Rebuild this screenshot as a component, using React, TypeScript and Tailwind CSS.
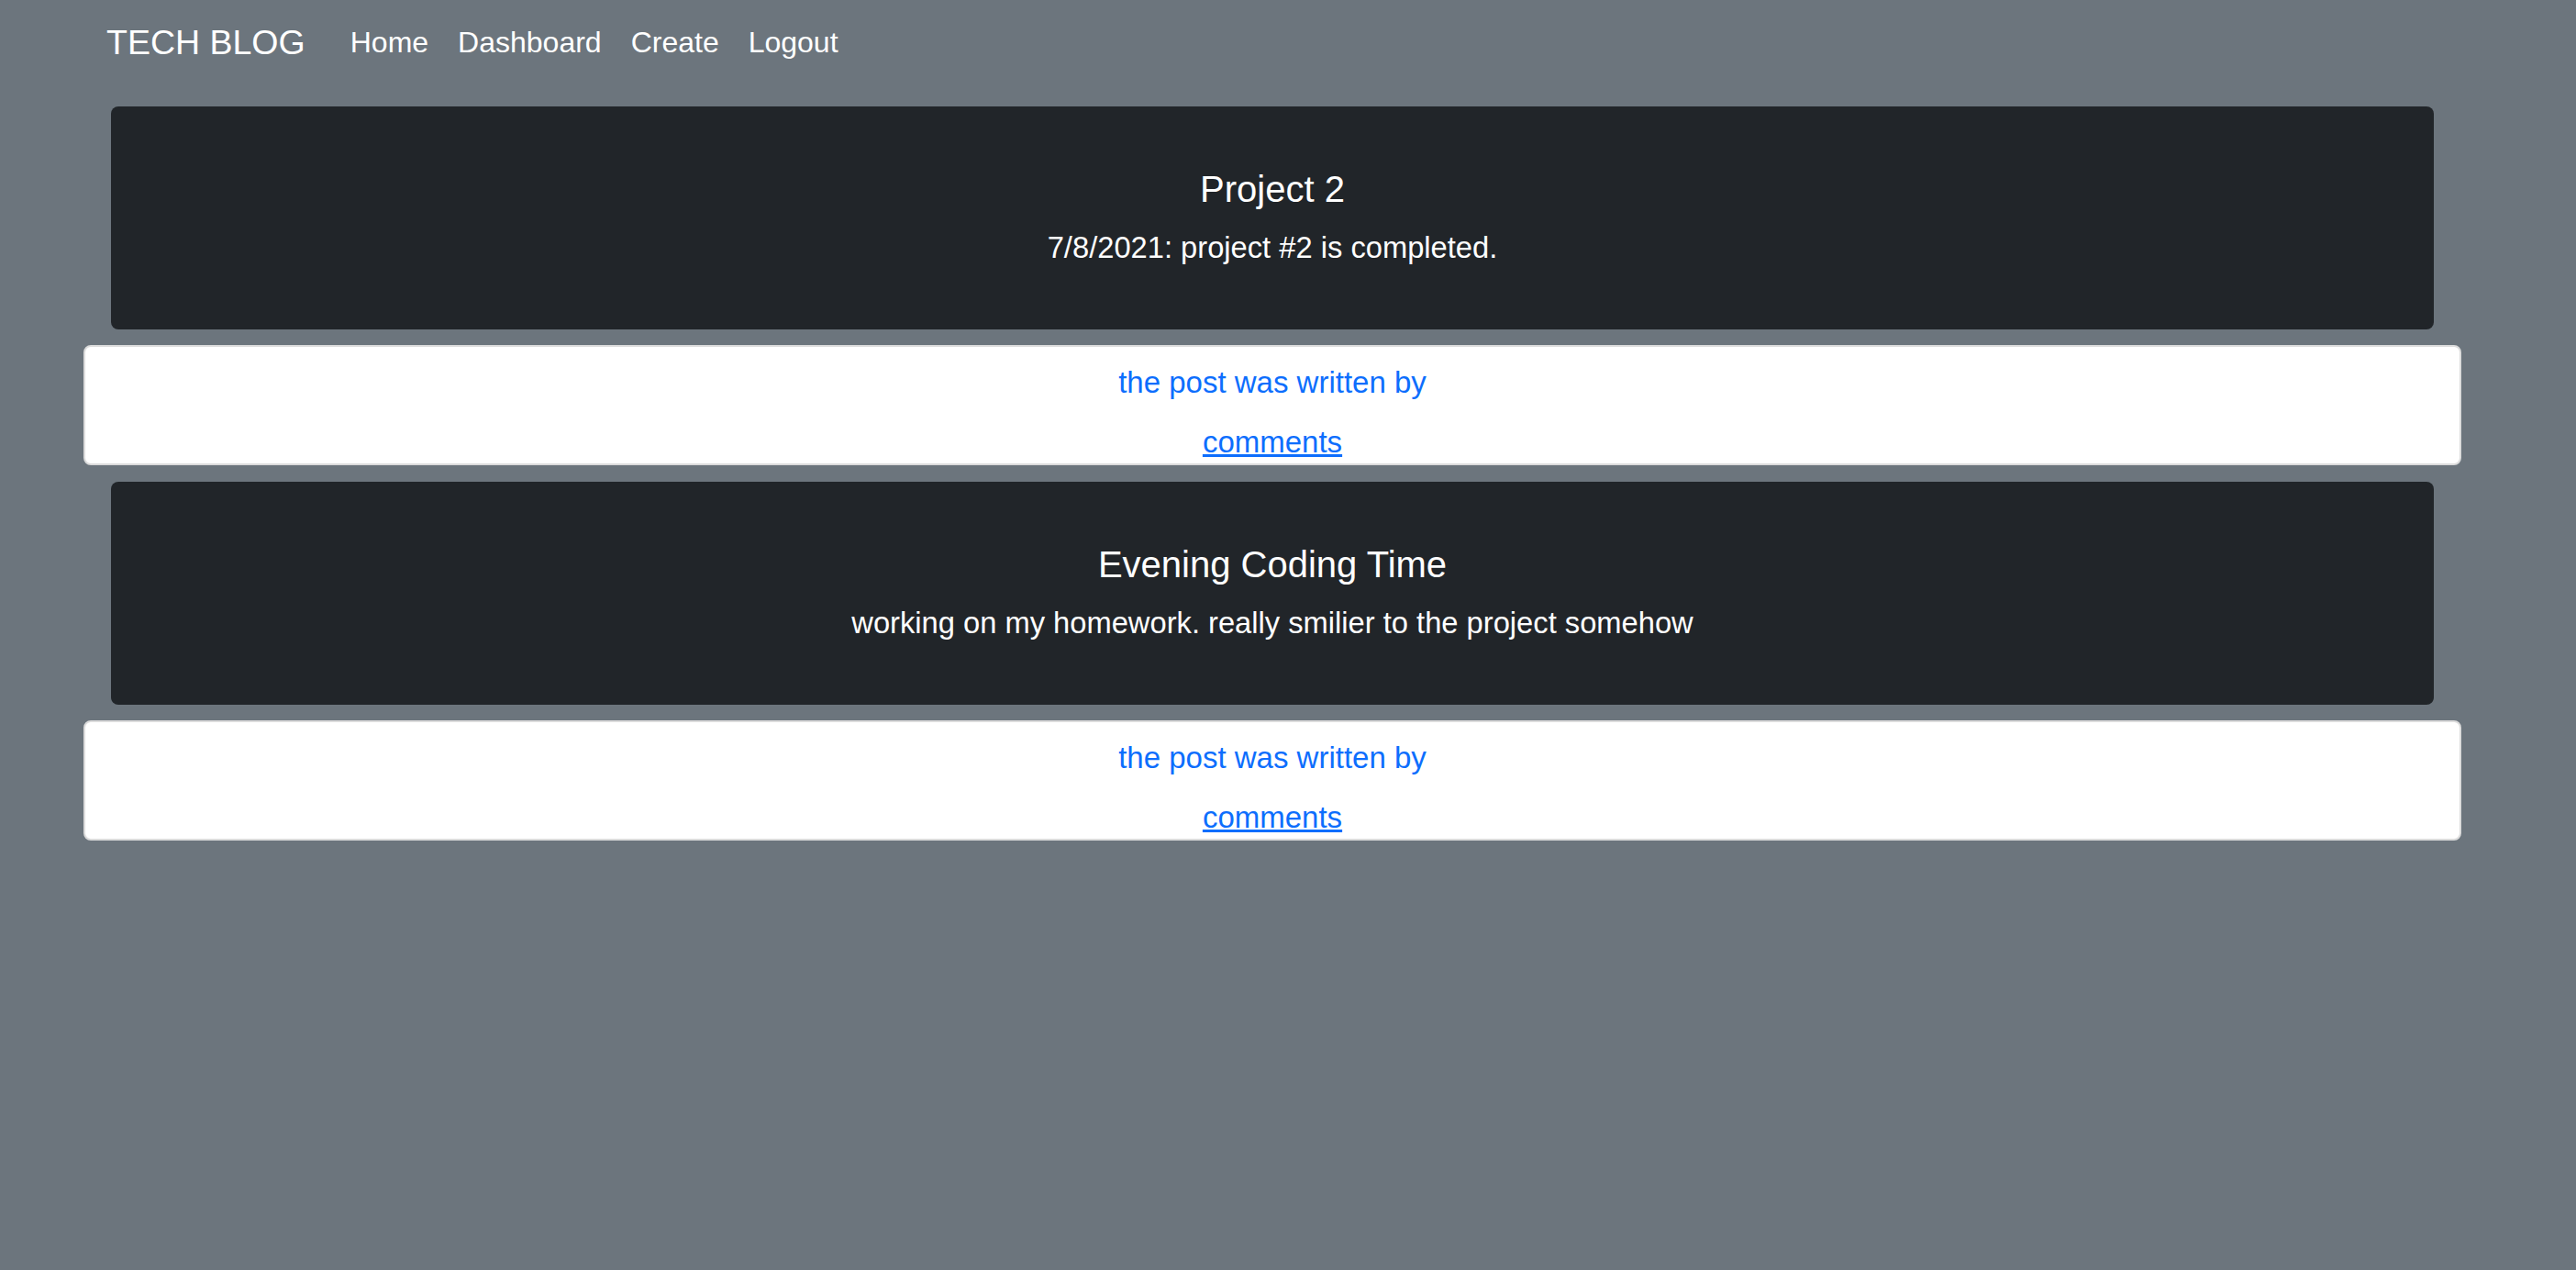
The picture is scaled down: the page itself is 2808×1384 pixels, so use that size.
import React from "react";

const posts = [
  { title: "Project 2", body: "7/8/2021: project #2 is completed." },
  { title: "Evening Coding Time", body: "working on my homework. really smilier to the project somehow" },
];

export default function App() {
  return (
    <div
      className="min-h-screen w-full bg-[#6c757d] text-white"
      style={{ fontFamily: '"Liberation Sans", Arial, sans-serif' }}
    >
      <nav className="flex items-center h-[90px] pl-[116px] pt-[2px]">
        <span className="text-[37.5px] leading-[48px] mr-[33px]">TECH BLOG</span>
        <div className="flex items-center">
          {["Home", "Dashboard", "Create", "Logout"].map((l) => (
            <a key={l} className="px-[16px] text-[32px] leading-[48px] text-white">
              {l}
            </a>
          ))}
        </div>
      </nav>
      <main className="ml-[91px] w-[2592px] pt-[26px] flex flex-col">
        {posts.map((p) => (
          <div key={p.title} className="flex flex-col">
            <div className="mx-[30px] h-[243px] rounded-[8px] bg-[#212529] flex flex-col items-center pt-[66px] text-center">
              <h5 className="text-[40px] leading-[48px] font-medium mb-[16px]">{p.title}</h5>
              <p className="text-[32.7px] leading-[48px]">{p.body}</p>
            </div>
            <div className="mt-[17px] mb-[18px] h-[131px] rounded-[8px] border-2 border-[#dcdcdc] bg-white flex flex-col items-center pt-[15px] text-center">
              <p className="text-[33px] leading-[48px] text-[#0d6efd] mb-[17px]">the post was written by</p>
              <a className="text-[33px] leading-[48px] text-[#0d6efd] underline">comments</a>
            </div>
          </div>
        ))}
      </main>
    </div>
  );
}
